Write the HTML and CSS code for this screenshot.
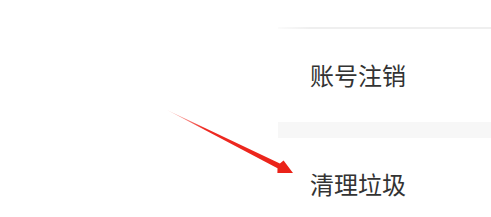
FILE: index.html
```html
<!DOCTYPE html>
<html lang="zh">
<head>
<meta charset="utf-8">
<link rel="stylesheet" href="styles.css">
</head>
<body>
<div class="page">
  <div class="left"></div>
  <div class="menu">
    <div class="top"></div>
    <div class="divider"></div>
    <div class="item">账号注销</div>
    <div class="band"></div>
    <div class="item">清理垃圾</div>
  </div>
  <svg class="arrow" width="491" height="217" viewBox="0 0 491 217">
    <defs>
      <linearGradient id="g" x1="167" y1="110" x2="293" y2="173" gradientUnits="userSpaceOnUse">
        <stop offset="0" stop-color="#f3453d" stop-opacity="0.25"/>
        <stop offset="0.3" stop-color="#ee2a22"/>
        <stop offset="1" stop-color="#ea2218"/>
      </linearGradient>
    </defs>
    <polygon fill="url(#g)" points="167,110 279.9,163.4 283.6,160.4 293,173 277.4,173 277.5,168.2"/>
  </svg>
</div>
</body>
</html>
```
FILE: styles.css
```css
html, body {
  margin: 0;
  padding: 0;
  background: #ffffff;
}
.page {
  position: relative;
  width: 491px;
  height: 217px;
  overflow: hidden;
  display: grid;
  grid-template-columns: 278px 1fr;
  font-family: "Noto Sans CJK SC", "Noto Sans", sans-serif;
}
.menu {
  display: flex;
  flex-direction: column;
}
.top {
  height: 27px;
}
.divider {
  height: 2px;
  background: linear-gradient(to right, #fbfbfb 0, #efefef 32px, #efefef 100%);
}
.item {
  height: 93px;
  line-height: 92px;
  padding-left: 32px;
  font-size: 24px;
  color: #333333;
}
.band {
  height: 16px;
  background: #f7f7f7;
}
.arrow {
  position: absolute;
  left: 0;
  top: 0;
}
```
